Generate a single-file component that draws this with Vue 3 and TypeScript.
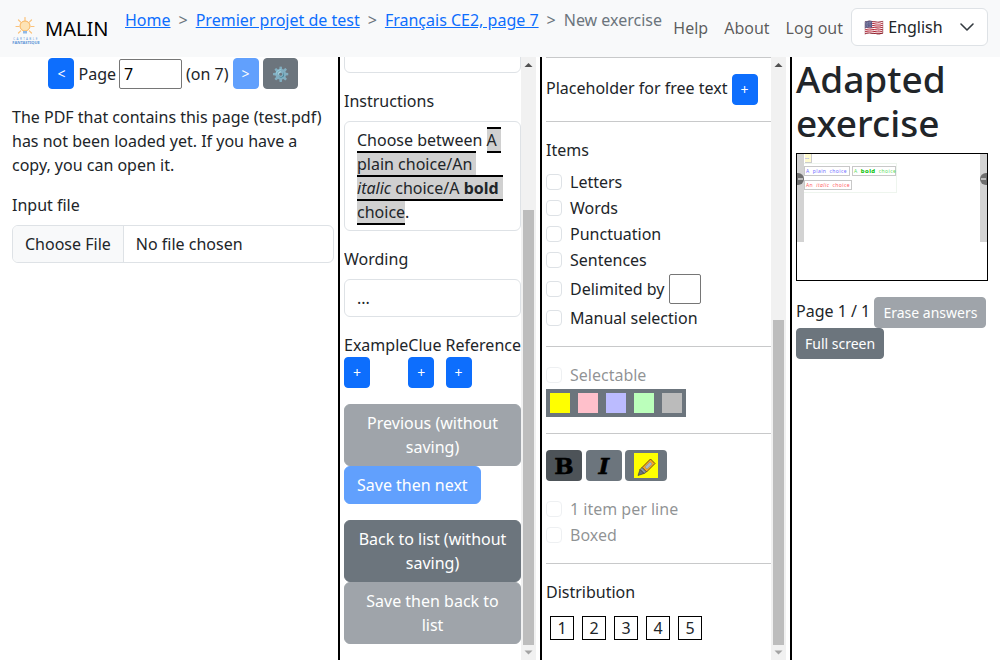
<script setup lang="ts">
import { onMounted, ref } from 'vue'

const crumbs = [
  { label: 'Home', link: true },
  { label: 'Premier projet de test', link: true },
  { label: 'Français CE2, page 7', link: true },
  { label: 'New exercise', link: false }
]
const navLinks = ['Help', 'About', 'Log out']
const itemKinds = ['Letters', 'Words', 'Punctuation', 'Sentences']
const colors = ['#ffff00', '#ffc0cb', '#bbbbff', '#bbffbb', '#bbbbbb']
const distribution = [1, 2, 3, 4, 5]
const blocks = ['Example', 'Clue', 'Reference']

const editorCol = ref<HTMLElement | null>(null)
const optionsCol = ref<HTMLElement | null>(null)

onMounted(() => {
  // both panels show their bottom part
  for (const col of [editorCol.value, optionsCol.value]) {
    if (col) col.scrollTop = col.scrollHeight
  }
})
</script>

<template>
  <div class="app">
    <nav class="navbar">
      <a class="brand">
        <svg class="logo" width="28" height="28" viewBox="0 0 28 28">
          <g stroke="#fbc27a" stroke-width="1.2" stroke-linecap="round">
            <path d="M13 0.5v3M4 9.500h3M19 9.500h3M6.500 3l2.200 2.200M19.500 3l-2.200 2.200M6.500 16l2.200-2.200M19.500 16l-2.200-2.200" />
          </g>
          <circle cx="13" cy="9" r="5" fill="#fde3b5" stroke="#f9b45a" stroke-width="1" />
          <path d="M11 14h4v2.500h-4z" fill="#8fb8e8" />
          <text x="14" y="22.800" text-anchor="middle" class="logo-top">CARTABLE</text>
          <text x="14" y="27" text-anchor="middle" class="logo-bottom">FANTASTIQUE</text>
        </svg>
        <span>MALIN</span>
      </a>
      <ol class="breadcrumb">
        <li v-for="(crumb, i) in crumbs" :key="crumb.label" class="crumb">
          <span v-if="i > 0" class="crumb-sep">&gt;</span>
          <a v-if="crumb.link" class="crumb-link">{{ crumb.label }}</a>
          <span v-else>{{ crumb.label }}</span>
        </li>
      </ol>
      <div class="nav-right">
        <a v-for="link in navLinks" :key="link" class="nav-link">{{ link }}</a>
        <div class="lang-select">
          <span>🇺🇸 English</span>
          <svg width="16" height="16" viewBox="0 0 16 16">
            <path d="m2 5 6 6 6-6" fill="none" stroke="#343a40" stroke-width="1.600" stroke-linecap="round" stroke-linejoin="round" />
          </svg>
        </div>
      </div>
    </nav>

    <main class="columns">
      <section class="col col-pdf">
        <div class="pager">
          <button class="btn btn-sm primary">&lt;</button>
          <span>Page</span>
          <input class="page-input" value="7" />
          <span>(on 7)</span>
          <button class="btn btn-sm primary" disabled>&gt;</button>
          <button class="btn btn-sm secondary">⚙️</button>
        </div>
        <p class="pdf-note">
          The PDF that contains this page (test.pdf) has not been loaded yet. If you have a copy, you can open it.
        </p>
        <label class="label">Input file</label>
        <div class="file-input">
          <span class="file-button">Choose File</span>
          <span class="file-name">No file chosen</span>
        </div>
      </section>

      <section class="col col-editor">
        <div ref="editorCol" class="scroller">
          <div class="field">
            <div class="control control-top"></div>
          </div>
          <div class="field">
            <label class="label">Instructions</label>
            <div class="control">
              Choose between
              <span class="choice">A plain choice/An <i>italic</i> choice/A <b>bold</b> choice</span>.
            </div>
          </div>
          <div class="field">
            <label class="label">Wording</label>
            <div class="control">...</div>
          </div>
          <div class="blocks">
            <div v-for="block in blocks" :key="block" class="block-item">
              <div>{{ block }}</div>
              <button class="btn btn-sm primary">+</button>
            </div>
          </div>
          <div class="actions">
            <button class="btn block secondary" disabled>Previous (without saving)</button>
            <button class="btn primary" disabled>Save then next</button>
            <button class="btn block secondary back">Back to list (without saving)</button>
            <button class="btn block secondary" disabled>Save then back to list</button>
          </div>
        </div>
        <div class="scrollbar">
          <svg class="scroll-arrow" width="15" height="15" viewBox="0 0 15 15"><path d="M3.500 10 7.500 6l4 4z" fill="#505050" /></svg>
          <div class="scroll-track"><div class="scroll-thumb thumb-editor"></div></div>
          <svg class="scroll-arrow" width="15" height="15" viewBox="0 0 15 15"><path d="M3.500 5.500 7.500 9.500l4-4z" fill="#a3a3a3" /></svg>
        </div>
      </section>

      <section class="col col-options">
        <div ref="optionsCol" class="scroller">
          <div class="options-top"></div>
          <hr />
          <div class="placeholder-row">
            <span>Placeholder for free text</span>
            <button class="btn btn-sm primary">+</button>
          </div>
          <hr />
          <div class="label">Items</div>
          <label v-for="kind in itemKinds" :key="kind" class="check">
            <input type="checkbox" />
            <span>{{ kind }}</span>
          </label>
          <label class="check check-delimited">
            <input type="checkbox" />
            <span>Delimited by</span>
            <input class="delimiter" />
          </label>
          <label class="check last">
            <input type="checkbox" />
            <span>Manual selection</span>
          </label>
          <hr />
          <label class="check is-disabled">
            <input type="checkbox" disabled />
            <span>Selectable</span>
          </label>
          <div class="swatches">
            <span v-for="color in colors" :key="color" class="swatch" :style="{ background: color }"></span>
          </div>
          <hr />
          <div class="format-buttons">
            <button class="btn format active"><span class="format-b">B</span></button>
            <button class="btn format"><span class="format-i">I</span></button>
            <button class="btn format highlight">
              <svg width="24" height="25" viewBox="0 0 24 25">
                <rect width="24" height="25" fill="#ffff00" />
                <path d="M8 14.500 16.500 6l4.500 4.500-8.500 8.500z" fill="#f5a623" stroke="#5f4413" stroke-width="0.900" />
                <path d="M11 14 16 9l2 2-5 5z" fill="#a9b7c6" stroke="#7f8c99" stroke-width="0.500" />
                <path d="M8 14.500l4.500 4.500-2.500 1.500-4-4z" fill="#8c98a5" stroke="#444" stroke-width="0.700" />
                <path d="M6 16.500 10 20.500 4 22.500z" fill="#6b7280" stroke="#333" stroke-width="0.600" />
              </svg>
            </button>
          </div>
          <label class="check is-disabled">
            <input type="checkbox" disabled />
            <span>1 item per line</span>
          </label>
          <label class="check is-disabled last">
            <input type="checkbox" disabled />
            <span>Boxed</span>
          </label>
          <hr />
          <div class="label">Distribution</div>
          <div class="distribution">
            <span v-for="n in distribution" :key="n" class="dist-box">{{ n }}</span>
          </div>
        </div>
        <div class="scrollbar">
          <svg class="scroll-arrow" width="15" height="15" viewBox="0 0 15 15"><path d="M3.500 10 7.500 6l4 4z" fill="#505050" /></svg>
          <div class="scroll-track"><div class="scroll-thumb thumb-options"></div></div>
          <svg class="scroll-arrow" width="15" height="15" viewBox="0 0 15 15"><path d="M3.500 5.500 7.500 9.500l4-4z" fill="#a3a3a3" /></svg>
        </div>
      </section>

      <section class="col col-preview">
        <h1 class="title">Adapted exercise</h1>
        <div class="preview">
          <div class="mini-page">
            <div class="mini-bar"><span class="mini-arrow mini-arrow-left"></span></div>
            <div class="mini-body">
              <div class="mini-instruction"><span>...</span></div>
              <div class="mini-card">
                <div class="mini-line">
                  <span class="mini-choice blue">A plain choice</span>
                  <span class="mini-choice green">A <b>bold</b> choice</span>
                </div>
                <div class="mini-line">
                  <span class="mini-choice red">An <i>italic</i> choice</span>
                </div>
              </div>
            </div>
            <div class="mini-bar"><span class="mini-arrow mini-arrow-right"></span></div>
          </div>
        </div>
        <div class="preview-footer">
          Page 1 / 1
          <button class="btn btn-sm secondary" disabled>Erase answers</button>
          <button class="btn btn-sm secondary">Full screen</button>
        </div>
      </section>
    </main>
  </div>
</template>

<style>
html,
body {
  margin: 0;
  overflow: hidden;
}
</style>

<style scoped>
* {
  box-sizing: border-box;
}

.app {
  width: 1000px;
  height: 660px;
  display: flex;
  flex-direction: column;
  font-family: 'Noto Sans', sans-serif;
  font-size: 16px;
  line-height: 24px;
  color: #212529;
  background: #fff;
}

.navbar {
  flex: none;
  height: 57px;
  display: flex;
  background: #f8f9fa;
  padding: 0 12px;
}

.brand {
  display: flex;
  align-items: center;
  gap: 5px;
  font-size: 20px;
  color: #000;
  width: 113px;
  padding-top: 1px;
}

.logo {
  margin-top: 4px;
}

.logo-top {
  font-family: 'Noto Sans', sans-serif;
  font-size: 3px;
  letter-spacing: 1.400px;
  fill: #6aa0dc;
}

.logo-bottom {
  font-family: 'Noto Sans', sans-serif;
  font-size: 4px;
  font-weight: 700;
  fill: #5b93d6;
}

.breadcrumb {
  list-style: none;
  margin: 0;
  padding: 8px 0 0;
  display: flex;
  flex: 1;
  color: #6c757d;
}

.crumb-sep {
  padding: 0 8px;
}

.crumb-link {
  color: #0d6efd;
  text-decoration: underline;
}

.nav-right {
  display: flex;
  align-items: flex-start;
}

.nav-link {
  color: rgba(0, 0, 0, 0.65);
  padding: 16px 8px 0;
}

.lang-select {
  width: 137px;
  height: 38px;
  margin: 8px 0 0;
  padding: 6px 12px;
  border: 1px solid #dee2e6;
  border-radius: 6px;
  background: #fff;
  display: flex;
  align-items: center;
  justify-content: space-between;
}

.columns {
  flex: 1;
  min-height: 0;
  display: flex;
}

.col {
  height: 603px;
  flex: none;
}

.col-pdf {
  width: 340px;
  padding: 1px 4px 0 12px;
  border-right: 2px solid #000;
}

.col-editor {
  width: 202px;
  padding: 0 4px;
  border-right: 2px solid #000;
  display: flex;
}

.col-options {
  width: 250px;
  padding: 0 4px;
  border-right: 2px solid #000;
  display: flex;
}

.col-preview {
  width: 208px;
  padding: 0 12px 0 4px;
}

.scroller {
  flex: 1;
  min-width: 0;
  height: 100%;
  overflow: hidden;
}

.scrollbar {
  flex: none;
  width: 15px;
  height: 100%;
  display: flex;
  flex-direction: column;
  background: #f1f1f1;
}

.scroll-arrow {
  flex: none;
  display: block;
}

.scroll-track {
  flex: 1;
  min-height: 0;
  padding: 0 2px;
}

.scroll-thumb {
  background: #bdbdbd;
}

.thumb-editor {
  margin-top: 138px;
  height: 435px;
}

.thumb-options {
  margin-top: 248px;
  height: 325px;
}

.btn {
  display: inline-block;
  font: inherit;
  color: #fff;
  border: 1px solid transparent;
  border-radius: 6px;
  padding: 6px 12px;
  text-align: center;
  vertical-align: middle;
}

.btn-sm {
  font-size: 14px;
  line-height: 21px;
  padding: 4px 8px;
  border-radius: 4px;
}

.btn:disabled {
  opacity: 0.65;
}

.primary {
  background: #0d6efd;
  border-color: #0d6efd;
}

.secondary {
  background: #6c757d;
  border-color: #6c757d;
}

.block {
  display: block;
  width: 100%;
}

.pager {
  display: flex;
  justify-content: center;
  align-items: center;
  gap: 4px;
}

.page-input {
  width: 63px;
  height: 30px;
  margin-left: -1px;
  padding: 1px 2px 1px 4px;
  font: inherit;
  color: #000;
  border: 1px solid #767676;
  border-radius: 2px;
  outline: none;
}

.pdf-note {
  margin: 16px 0;
}

.label {
  display: block;
  margin-bottom: 8px;
}

.file-input {
  display: flex;
  height: 38px;
  border: 1px solid #dee2e6;
  border-radius: 6px;
  overflow: hidden;
  align-items: stretch;
}

.file-button {
  padding: 6px 12px;
  background: #f8f9fa;
  border-right: 1px solid #dee2e6;
}

.file-name {
  padding: 6px 12px;
}

.field {
  margin-bottom: 16px;
}

.control {
  border: 1px solid #dee2e6;
  border-radius: 6px;
  padding: 6px 12px;
  min-height: 38px;
}

.control-top {
  height: 207px;
}

.choice {
  background: #d0d0d0;
  border-top: 2px solid #000;
  border-bottom: 2px solid #000;
  white-space: pre-wrap;
}

.blocks {
  display: flex;
  margin-bottom: 16px;
}

.block-item:last-child {
  margin-left: auto;
}

.actions {
  padding-bottom: 16px;
}

.back {
  margin-top: 16px;
}

.options-top {
  height: 444px;
}

hr {
  margin: 16px 0;
  border: 0;
  border-top: 1px solid #c8c9ca;
}

.placeholder-row {
  display: flex;
  align-items: flex-start;
  gap: 4px;
}

.placeholder-row span {
  margin-top: 2px;
}

.check {
  display: flex;
  min-height: 24px;
  margin-bottom: 2px;
  align-items: flex-start;
}

.check.last {
  margin-bottom: 0;
}

.check input[type='checkbox'] {
  appearance: none;
  width: 16px;
  height: 16px;
  margin: 4px 8px 0 0;
  border: 1px solid #dee2e6;
  border-radius: 4px;
  background: #fff;
  flex: none;
}

.check.is-disabled {
  color: rgba(33, 37, 41, 0.5);
}

.check.is-disabled input {
  opacity: 0.5;
}

.check-delimited {
  align-items: center;
  height: 30px;
}

.check-delimited input[type='checkbox'] {
  margin-top: 0;
}

.delimiter {
  width: 32px;
  height: 30px;
  margin-left: 4px;
  border: 1px solid #767676;
  border-radius: 2px;
  outline: none;
}

.swatches {
  width: 140px;
  height: 28px;
  display: flex;
  gap: 8px;
  padding: 4px;
  background: #6c757d;
}

.swatch {
  width: 20px;
  height: 20px;
}

.format-buttons {
  display: flex;
  gap: 4px;
  margin-bottom: 16px;
}

.format {
  height: 31px;
  width: 36px;
  padding: 0;
  background: #6c757d;
  border-radius: 4px;
  color: #000;
  display: flex;
  align-items: center;
  justify-content: center;
}

.format.active {
  background: #4d5358;
}

.format-b,
.format-i {
  font-family: 'DejaVu Serif', serif;
  font-weight: 700;
  font-size: 23px;
  line-height: 31px;
  -webkit-text-stroke: 0.5px #000;
}

.format-i {
  font-style: italic;
}

.format.highlight {
  width: 42px;
  margin-left: -1px;
}

.distribution {
  display: flex;
  gap: 8px;
  padding: 4px 4px 20px;
}

.dist-box {
  width: 24px;
  height: 24px;
  border: 1px solid #000;
  text-align: center;
  line-height: 22px;
}

.title {
  margin: 0 0 8px;
  font-size: 37px;
  line-height: 44px;
  font-weight: 500;
}

.preview {
  height: 128px;
  border: 1px solid #000;
  overflow: hidden;
  margin-bottom: 16px;
}

.mini-page {
  height: 88px;
  display: flex;
  font-size: 5px;
  line-height: 8px;
  letter-spacing: 0.4px;
  word-spacing: 1.500px;
}

.mini-bar {
  position: relative;
  width: 7px;
  flex: none;
  background: #d3d3d3;
  overflow: hidden;
}

.mini-arrow {
  position: absolute;
  top: 19px;
  width: 12px;
  height: 12px;
  border-radius: 50%;
  background: #6e6e6e;
}

.mini-arrow::after {
  content: '';
  position: absolute;
  top: 5px;
  width: 5px;
  height: 2px;
  background: #bbb;
}

.mini-arrow-left {
  left: -5px;
}

.mini-arrow-left::after {
  left: 6px;
}

.mini-arrow-right {
  left: 0;
}

.mini-arrow-right::after {
  left: 1px;
}

.mini-body {
  flex: 1;
}

.mini-instruction span {
  display: block;
  width: 7px;
  height: 9px;
  margin-left: 1px;
  background: #fffbd0;
  border-right: 1px solid #ccc;
  border-bottom: 1px solid #ccc;
  color: #5555ff;
  font-size: 5px;
  line-height: 7px;
  letter-spacing: 0;
}

.mini-card {
  width: 94px;
  height: 30px;
  margin-left: -1px;
  padding: 2px 0 0;
  border: 1px solid #eef5ee;
}

.mini-line {
  display: flex;
  gap: 2px;
  height: 10px;
  margin-bottom: 4px;
}

.mini-choice {
  height: 10px;
  padding: 0 1px;
  border: 1px solid #c8c8c8;
  white-space: nowrap;
}

.blue {
  color: #7070ff;
  min-width: 46px;
}

.green {
  color: #60dd60;
  min-width: 44px;
}

.green b {
  color: #00c000;
  font-size: 6px;
}

.red {
  color: #ff6060;
  min-width: 48px;
}
</style>
